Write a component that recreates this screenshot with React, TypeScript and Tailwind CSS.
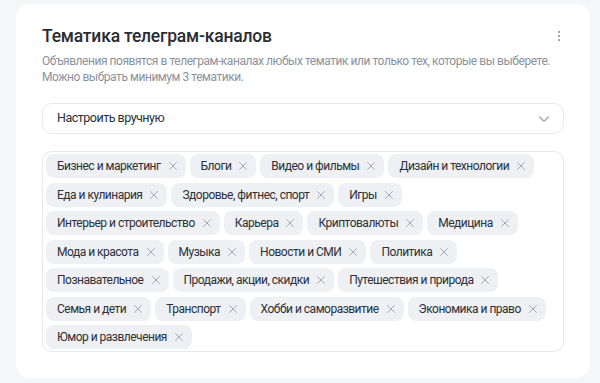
import React from "react";
import { ChevronDown, EllipsisVertical, X } from "lucide-react";

const rows: string[][] = [
  ["Бизнес и маркетинг", "Блоги", "Видео и фильмы", "Дизайн и технологии"],
  ["Еда и кулинария", "Здоровье, фитнес, спорт", "Игры"],
  ["Интерьер и строительство", "Карьера", "Криптовалюты", "Медицина"],
  ["Мода и красота", "Музыка", "Новости и СМИ", "Политика"],
  ["Познавательное", "Продажи, акции, скидки", "Путешествия и природа"],
  ["Семья и дети", "Транспорт", "Хобби и саморазвитие", "Экономика и право"],
  ["Юмор и развлечения"],
];

const Tag: React.FC<{ label: string }> = ({ label }) => (
  <div className="flex h-[24px] shrink-0 items-center gap-[5px] whitespace-nowrap rounded-[8px] bg-[#eef0f4] pl-[11px] pr-[6px] text-[12px] tracking-[-0.5px] text-[#2b2f36]">
    <span>{label}</span>
    <X size={14} strokeWidth={1.6} className="text-[#a0a5ad]" />
  </div>
);

export default function App() {
  return (
    <div
      className="min-h-[383px] w-[600px] bg-[#f5f6f8] pt-[4px] pl-[16px]"
      style={{ fontFamily: "Roboto, 'Noto Sans', sans-serif" }}
    >
      <div className="h-[374px] w-[574px] rounded-[14px] bg-white px-[26px] pt-[19px]">
        <div className="flex items-start justify-between">
          <h1 className="whitespace-nowrap text-[17.5px] font-medium leading-[26px] tracking-[-0.2px] text-[#2a2d33]">
            Тематика телеграм-каналов
          </h1>
          <EllipsisVertical size={14} className="mt-[6px] mr-[-2px] text-[#a0a5ad]" />
        </div>
        <p className="mt-[4px] whitespace-nowrap text-[12px] leading-[16px] tracking-[-0.45px] text-[#8c919b]">
          Объявления появятся в телеграм-каналах любых тематик или только тех, которые вы выберете.
          <br />
          Можно выбрать минимум 3 тематики.
        </p>
        <div className="mt-[18px] flex h-[31px] items-center justify-between rounded-[10px] border border-[#e6e8ec] pl-[14px] pr-[10px] text-[12.5px] tracking-[-0.5px] text-[#2b2f36]">
          <span>Настроить вручную</span>
          <ChevronDown size={18} strokeWidth={1.5} className="text-[#9ca1ab]" />
        </div>
        <div className="mt-[17px] flex h-[201px] flex-col gap-[4.5px] rounded-[10px] border border-[#e6e8ec] px-[3px] pt-[2px]">
          {rows.map((row, i) => (
            <div key={i} className="flex gap-[4px]">
              {row.map((t) => (
                <Tag key={t} label={t} />
              ))}
            </div>
          ))}
        </div>
      </div>
    </div>
  );
}
